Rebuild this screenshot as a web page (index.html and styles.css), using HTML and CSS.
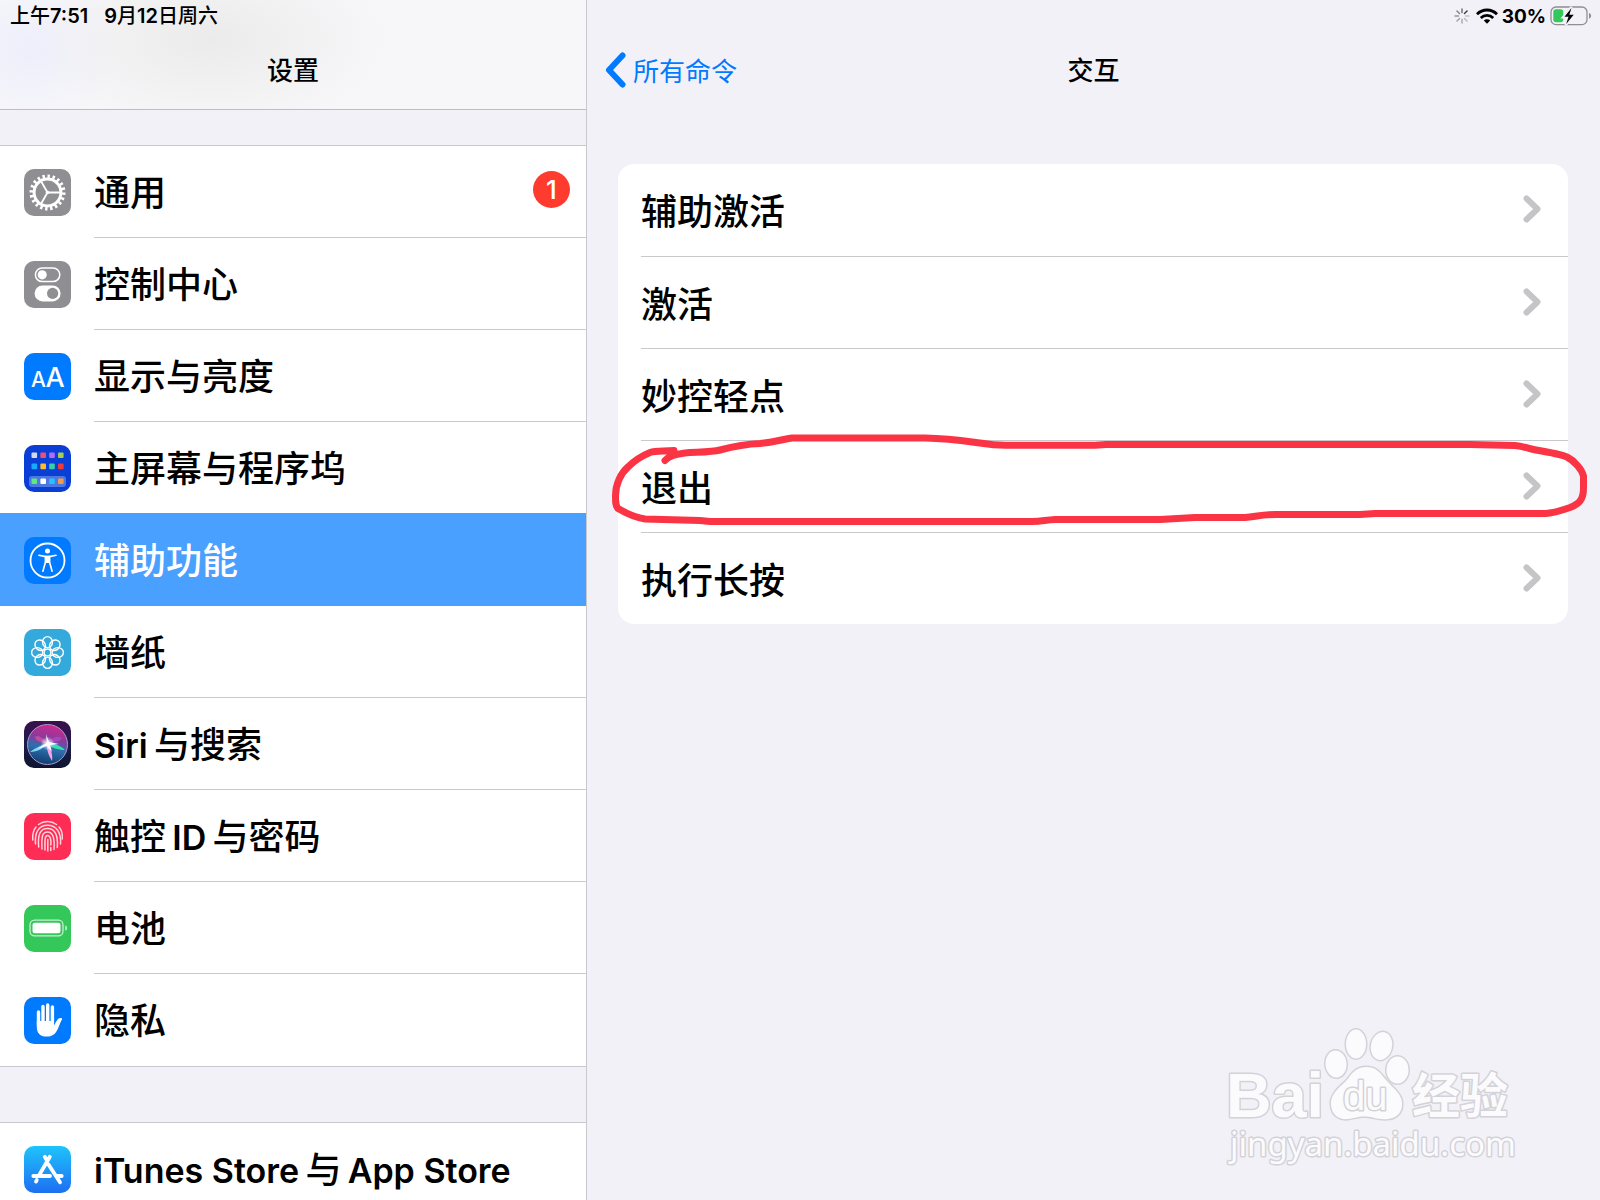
FILE: index.html
```html
<!DOCTYPE html>
<html lang="zh-CN">
<head>
    <meta charset="UTF-8">
    <meta name="viewport" content="width=device-width, initial-scale=1.0">
    <title>设置</title>
    <link rel="stylesheet" href="styles.css">
</head>
<body>
    <aside class="sidebar">
        <header class="sidebar-header">
            <div class="status-bar status-left">
                <span>上午<b>7:51</b></span>
                <span><b>9</b>月<b>12</b>日周六</span>
            </div>
            <div class="nav-bar">
                <h1 class="nav-title">设置</h1>
            </div>
        </header>

        <nav>
            <ul class="group">
                <li><a class="row" href="#general">
                    <svg class="icon" viewBox="0 0 47 47">
                        <rect width="47" height="47" rx="10" fill="#8e8e93"/>
                        <g fill="none" stroke="#fff">
                            <circle cx="23.5" cy="23.5" r="16" stroke-width="4" pathLength="80" stroke-dasharray="1.9 2.1"/>
                            <circle cx="23.5" cy="23.5" r="13.4" stroke-width="3"/>
                            <path d="M23.5 23.5H36M23.5 23.5L17.2 12.5M23.5 23.5L17.2 34.5" stroke-width="1.8"/>
                        </g>
                        <circle cx="23.5" cy="23.5" r="1.8" fill="#fff"/>
                    </svg>
                    <span class="row-body">通用<span class="badge">1</span></span>
                </a></li>
                <li><a class="row" href="#control">
                    <svg class="icon" viewBox="0 0 47 47">
                        <rect width="47" height="47" rx="10" fill="#8e8e93"/>
                        <rect x="11.4" y="7" width="24.4" height="13.6" rx="6.8" fill="none" stroke="#fff" stroke-width="1.5"/>
                        <circle cx="18.2" cy="13.8" r="4.6" fill="#fff"/>
                        <rect x="10.6" y="24.4" width="26" height="16" rx="8" fill="#fff"/>
                        <circle cx="28.6" cy="32.4" r="5.6" fill="#8e8e93"/>
                    </svg>
                    <span class="row-body">控制中心</span>
                </a></li>
                <li><a class="row" href="#display">
                    <svg class="icon" viewBox="0 0 47 47">
                        <rect width="47" height="47" rx="10" fill="#007aff"/>
                        <text class="icon-text" x="7" y="33.5" font-size="21">A</text>
                        <text class="icon-text" x="21.5" y="33.5" font-size="27">A</text>
                    </svg>
                    <span class="row-body">显示与亮度</span>
                </a></li>
                <li><a class="row" href="#home">
                    <svg class="icon" viewBox="0 0 47 47">
                        <rect width="47" height="47" rx="10" fill="#0a3fd6"/>
                        <rect x="5" y="31" width="37" height="11" rx="3" fill="#4d78e2"/>
                        <rect x="7.5" y="7.5" width="5.6" height="5.6" rx="1" fill="#d5daea"/>
                        <rect x="16.4" y="7.5" width="5.6" height="5.6" rx="1" fill="#f0506e"/>
                        <rect x="25.2" y="7.5" width="5.6" height="5.6" rx="1" fill="#b469ff"/>
                        <rect x="34" y="7.5" width="5.6" height="5.6" rx="1" fill="#a6cf4c"/>
                        <rect x="7.5" y="18.6" width="5.6" height="5.6" rx="1" fill="#19aaff"/>
                        <rect x="16.4" y="18.6" width="5.6" height="5.6" rx="1" fill="#ffbd2b"/>
                        <rect x="25.2" y="18.6" width="5.6" height="5.6" rx="1" fill="#35d0a5"/>
                        <rect x="34" y="18.6" width="5.6" height="5.6" rx="1" fill="#f13a3a"/>
                        <rect x="7.5" y="33.5" width="5.6" height="5.6" rx="1" fill="#5fe87b"/>
                        <rect x="16.4" y="33.5" width="5.6" height="5.6" rx="1" fill="#fff"/>
                        <rect x="25.2" y="33.5" width="5.6" height="5.6" rx="1" fill="#22c3ff"/>
                        <rect x="34" y="33.5" width="5.6" height="5.6" rx="1" fill="#f59a4b"/>
                    </svg>
                    <span class="row-body">主屏幕与程序坞</span>
                </a></li>
                <li><a class="row selected" href="#accessibility" aria-current="page">
                    <svg class="icon" viewBox="0 0 47 47">
                        <rect width="47" height="47" rx="10" fill="#007aff"/>
                        <circle cx="23.5" cy="23.5" r="17" fill="none" stroke="#fff" stroke-width="1.8"/>
                        <circle cx="23.5" cy="14" r="2.5" fill="#fff"/>
                        <path d="M15 18.3L21.5 19.6V25L18.9 34.2M32 18.3L25.5 19.6V25L28.1 34.2" fill="none" stroke="#fff" stroke-width="1.6" stroke-linecap="round" stroke-linejoin="round"/>
                        <path d="M20.8 18.6H26.2V26H20.8Z" fill="#fff"/>
                    </svg>
                    <span class="row-body">辅助功能</span>
                </a></li>
                <li><a class="row" href="#wallpaper">
                    <svg class="icon" viewBox="0 0 47 47">
                        <rect width="47" height="47" rx="10" fill="#34aadc"/>
                        <g fill="none" stroke="#fff" stroke-width="1.4">
                            <ellipse cx="23.5" cy="13.2" rx="4.9" ry="5.6"/>
                            <ellipse cx="23.5" cy="13.2" rx="4.9" ry="5.6" transform="rotate(45 23.5 23.5)"/>
                            <ellipse cx="23.5" cy="13.2" rx="4.9" ry="5.6" transform="rotate(90 23.5 23.5)"/>
                            <ellipse cx="23.5" cy="13.2" rx="4.9" ry="5.6" transform="rotate(135 23.5 23.5)"/>
                            <ellipse cx="23.5" cy="13.2" rx="4.9" ry="5.6" transform="rotate(180 23.5 23.5)"/>
                            <ellipse cx="23.5" cy="13.2" rx="4.9" ry="5.6" transform="rotate(225 23.5 23.5)"/>
                            <ellipse cx="23.5" cy="13.2" rx="4.9" ry="5.6" transform="rotate(270 23.5 23.5)"/>
                            <ellipse cx="23.5" cy="13.2" rx="4.9" ry="5.6" transform="rotate(315 23.5 23.5)"/>
                            <circle cx="23.5" cy="23.5" r="3.4"/>
                        </g>
                    </svg>
                    <span class="row-body">墙纸</span>
                </a></li>
                <li><a class="row" href="#siri">
                    <svg class="icon" viewBox="0 0 47 47">
                        <defs>
                            <linearGradient id="siri-bg" x1="0" y1="0" x2="0" y2="1">
                                <stop offset="0" stop-color="#3a0f4d"/>
                                <stop offset=".5" stop-color="#1e1e4a"/>
                                <stop offset="1" stop-color="#0d1430"/>
                            </linearGradient>
                            <linearGradient id="siri-orb" x1=".6" y1="0" x2=".4" y2="1">
                                <stop offset="0" stop-color="#d0288f"/>
                                <stop offset=".35" stop-color="#8a3a9c"/>
                                <stop offset=".6" stop-color="#2c6fae"/>
                                <stop offset="1" stop-color="#123a6c"/>
                            </linearGradient>
                            <radialGradient id="siri-glow">
                                <stop offset="0" stop-color="#fff"/>
                                <stop offset="1" stop-color="#fff" stop-opacity="0"/>
                            </radialGradient>
                        </defs>
                        <rect width="47" height="47" rx="10" fill="url(#siri-bg)"/>
                        <circle cx="23.5" cy="23.5" r="20" fill="url(#siri-orb)" stroke="#a79bc4" stroke-width="1"/>
                        <path d="M23 22C17 15 13 14 11 16C12 20 18 22 23 22Z" fill="#e0509f" opacity=".7"/>
                        <path d="M24 22C27 17 33 14 38 17C36 21 30 22 24 22Z" fill="#b04cc4" opacity=".7"/>
                        <path d="M24 22C30 22 37 25 41 29C34 29 27 27 24 22Z" fill="#35e0b0"/>
                        <path d="M23 22C17 24 10 28 6 31C13 31 21 27 23 22Z" fill="#7fd4f4"/>
                        <path d="M23 22C27 28 29 34 28 40C25 35 22 28 23 22Z" fill="#f3a4e4"/>
                        <path d="M23 22L22 13L25 21L35 23L26 24L28 31L23 25L13 28Z" fill="#fff"/>
                        <circle cx="23.5" cy="22.5" r="7" fill="url(#siri-glow)"/>
                    </svg>
                    <span class="row-body"><span><span class="latin">Siri</span>&thinsp;与搜索</span></span>
                </a></li>
                <li><a class="row" href="#touchid">
                    <svg class="icon" viewBox="0 0 47 47">
                        <rect width="47" height="47" rx="10" fill="#ff2d55"/>
                        <g fill="none" stroke="#ffd5dd" stroke-width="1.5" stroke-linecap="round">
                            <path d="M14.5 11.5C20 7.6 27 7.6 32.5 11.5"/>
                            <path d="M8.8 27C8.2 21 9.5 17 12 14"/>
                            <path d="M11.5 31C10.5 19 15 12.2 23.5 12.2C32 12.2 37.5 19 36.5 31"/>
                            <path d="M35 14C37.6 17 38.8 21 38.2 26"/>
                            <path d="M14.7 34C13.6 22 16 15.6 23.5 15.6C31 15.6 34.3 22 33.3 34.5"/>
                            <path d="M18 36C17.4 24 18 19 23.5 19C29 19 30.8 25 30 36.5"/>
                            <path d="M21 37C20.8 27 20.8 22.4 23.5 22.4C26.8 22.4 27.3 28 26.8 32"/>
                            <path d="M23.8 26.5V38M26.8 34.5V37.5"/>
                        </g>
                    </svg>
                    <span class="row-body"><span>触控&thinsp;<span class="latin">ID</span>&thinsp;与密码</span></span>
                </a></li>
                <li><a class="row" href="#battery">
                    <svg class="icon" viewBox="0 0 47 47">
                        <rect width="47" height="47" rx="10" fill="#34c759"/>
                        <rect x="6" y="15.2" width="33" height="15.6" rx="4.5" fill="none" stroke="#c6f0d0" stroke-width="1.3"/>
                        <rect x="8.5" y="17.7" width="28" height="10.6" rx="2.2" fill="#fff"/>
                        <path d="M41.2 20.5C43.8 21 43.8 25.2 41.2 25.7Z" fill="#c6f0d0"/>
                    </svg>
                    <span class="row-body">电池</span>
                </a></li>
                <li><a class="row" href="#privacy">
                    <svg class="icon" viewBox="0 0 47 47">
                        <rect width="47" height="47" rx="10" fill="#007aff"/>
                        <path d="M14.5 15V28M19 9.5V26M23.7 8V26M28.4 10V26" fill="none" stroke="#fff" stroke-width="3.4" stroke-linecap="round"/>
                        <path d="M12.8 24H30V28.5C31.5 26 33 23 34.6 21.6C36 20.6 38 20.8 38.2 22C36.5 25 35.5 28 34 31.5C31.5 37.5 28 39.6 22.8 39.6C16 39.6 12.8 36 12.8 30Z" fill="#fff"/>
                    </svg>
                    <span class="row-body">隐私</span>
                </a></li>
            </ul>

            <ul class="group">
                <li><a class="row" href="#store">
                    <svg class="icon" viewBox="0 0 47 47">
                        <defs>
                            <linearGradient id="store-bg" x1="0" y1="0" x2="0" y2="1">
                                <stop offset="0" stop-color="#1fc3fb"/>
                                <stop offset="1" stop-color="#1d6ff2"/>
                            </linearGradient>
                        </defs>
                        <rect width="47" height="47" rx="10" fill="url(#store-bg)"/>
                        <g fill="none" stroke="#fff" stroke-width="3.8" stroke-linecap="round">
                            <path d="M25.8 10.8L15 29.5M20.8 10.8L23.4 15.2M24.5 18.5L36 36.3M12.8 34L12 35.6"/>
                            <path d="M9.3 30H26M32.5 30H37.7"/>
                        </g>
                    </svg>
                    <span class="row-body"><span><span class="latin">iTunes Store</span>&thinsp;与&thinsp;<span class="latin">App Store</span></span></span>
                </a></li>
            </ul>
        </nav>
    </aside>

    <main class="detail">
        <header class="detail-header">
            <div class="status-bar status-right">
                <svg class="spinner" viewBox="0 0 16 16" fill="none" stroke="#3c3c43" stroke-width="1.5" stroke-linecap="round">
                    <path d="M8 1V4.5" opacity=".7"/>
                    <path d="M13 3L10.5 5.5"/>
                    <path d="M15 8H11.5" opacity=".25"/>
                    <path d="M13 13L10.5 10.5" opacity=".3"/>
                    <path d="M8 15V11.5" opacity=".4"/>
                    <path d="M3 13L5.5 10.5" opacity=".45"/>
                    <path d="M1 8H4.5" opacity=".5"/>
                    <path d="M3 3L5.5 5.5" opacity=".6"/>
                </svg>
                <svg class="wifi" viewBox="0 0 22 16">
                    <g fill="none" stroke="#000" stroke-width="2.8">
                        <path d="M1 6.2C6.5 .6 15.5 .6 21 6.2"/>
                        <path d="M4.8 10C8.3 6.5 13.7 6.5 17.2 10"/>
                    </g>
                    <path d="M7.8 12.4C9.6 10.7 12.4 10.7 14.2 12.4L11 15.7Z"/>
                </svg>
                <b>30%</b>
                <svg class="battery" viewBox="0 0 42 20">
                    <rect x="1" y="1" width="36" height="17.6" rx="5" fill="none" stroke="#8e8e93" stroke-width="1.3"/>
                    <path d="M39 7C41.8 7.6 41.8 12 39 12.6Z" fill="#8e8e93"/>
                    <rect x="3.3" y="3.3" width="10" height="13" rx="2.8" fill="#34c759"/>
                    <path d="M21.5 1L13 11.3H18L15.8 19L24.5 8.3H19.3Z" stroke="#f2f1f7" stroke-width="2.5"/>
                    <path d="M21.5 2L14.5 10.7H18.5L16.2 18L23.7 8.8H19.3Z"/>
                </svg>
            </div>
            <div class="nav-bar">
                <a class="back" href="#commands">
                    <svg class="back-arrow" viewBox="0 0 21 36"><path d="M17.5 3.5L4 18L17.5 32.5" fill="none" stroke="#007aff" stroke-width="6" stroke-linecap="round" stroke-linejoin="round"/></svg>
                    所有命令
                </a>
                <h2 class="nav-title">交互</h2>
            </div>
        </header>

        <ul class="card">
            <li><a class="card-row" href="#assist">辅助激活
                <svg class="chevron" viewBox="0 0 18 28"><path d="M3.5 3.5L14.5 14L3.5 24.5"/></svg>
            </a></li>
            <li><a class="card-row" href="#activate">激活
                <svg class="chevron" viewBox="0 0 18 28"><path d="M3.5 3.5L14.5 14L3.5 24.5"/></svg>
            </a></li>
            <li><a class="card-row" href="#magic-tap">妙控轻点
                <svg class="chevron" viewBox="0 0 18 28"><path d="M3.5 3.5L14.5 14L3.5 24.5"/></svg>
            </a></li>
            <li class="marked">
                <a class="card-row" href="#escape">退出
                    <svg class="chevron" viewBox="0 0 18 28"><path d="M3.5 3.5L14.5 14L3.5 24.5"/></svg>
                </a>
                <!-- hand-drawn circle around the row -->
                <svg class="marker" viewBox="618 440 950 92" preserveAspectRatio="none">
                    <path d="M665 460.5C668 457 675 454 685 453C700 452 712 452 720 450C735 446 745 444 760 443.5C775 442 782 439.5 792 438H925C950 438.5 965 441 980 443C992 445 998 445.3 1006 445.3H1095L1106 444.5H1470L1515 445.5C1525 446.5 1528 448.5 1536 450C1548 452 1560 454 1567 457C1575 461 1582 470 1583.5 476V488C1583.5 500 1579 504 1570 507.5C1563 510 1552 513 1546 513.5H1375L1360 514.5H1275C1258 515 1255 517 1245 517.5H1195L1160 519.5H1055C1045 520 1042 521.5 1032 521.5H710L700 520.5L645 519C632 517 624 512 618 508.5C615.5 506 615.5 502 615.5 496C615.5 484 621 473 628 467C634 461 644 455 650 452.5C656 450.5 664 451.5 674 450.5"/>
                </svg>
            </li>
            <li><a class="card-row" href="#long-press">执行长按
                <svg class="chevron" viewBox="0 0 18 28"><path d="M3.5 3.5L14.5 14L3.5 24.5"/></svg>
            </a></li>
        </ul>

        <svg class="watermark" viewBox="0 0 290 150">
            <g class="outline">
                <text class="wm-logo" x="0" y="91">Bai</text>
                <ellipse cx="110" cy="38" rx="10.5" ry="13.5" transform="rotate(-5 110 38)"/>
                <ellipse cx="130" cy="18" rx="10" ry="14.5"/>
                <ellipse cx="155.5" cy="20" rx="10.5" ry="14" transform="rotate(12 155.5 20)"/>
                <ellipse cx="171.5" cy="44" rx="11" ry="13.5"/>
                <path d="M140 41C128 41 125 50 119 56C111 63 104 70 105 79C106 90 114 94 122 93C130 92 133 90 140 90.5C148 91 152 94 162 93C172 92 177 85 176 76C175 67 166 61 160 54C154 47 151 41 140 41Z"/>
                <text class="wm-du" x="117" y="84">du</text>
                <text class="wm-cjk" x="186" y="87">经验</text>
                <text class="wm-url" x="4" y="130">jingyan.baidu.com</text>
            </g>
        </svg>
    </main>
</body>
</html>
```
FILE: styles.css
```css
* {
    box-sizing: border-box;
}

body {
    margin: 0;
    height: 100vh;
    display: flex;
    overflow: hidden;
    background-color: #f2f1f7;
    color: #000;
    font-family: Inter, "Noto Sans CJK SC", sans-serif;
}

ul {
    list-style: none;
    margin: 0;
    padding: 0;
}

a {
    color: inherit;
    text-decoration: none;
}

svg {
    display: block;
    flex-shrink: 0;
}

.sidebar {
    flex: 0 0 587px;
    border-right: 1px solid #c9c8cd;
    overflow: hidden;
}

.sidebar-header {
    border-bottom: 1px solid #bebec2;
    background:
        radial-gradient(ellipse 180px 90px at 210px 40px, #ebebeb, transparent),
        radial-gradient(ellipse 90px 80px at 30px 50px, #eeeefc, transparent),
        #f7f7f9;
}

.status-bar {
    display: flex;
    align-items: center;
    height: 32px;
    font-weight: 500;
}

.status-bar b {
    font-weight: 600;
}

.status-left {
    gap: 16px;
    padding: 0 10px 4px;
    font-size: 20px;
}

.status-right {
    justify-content: flex-end;
    gap: 4px;
    padding-right: 8px;
    font-size: 19px;
}

.status-right b {
    font-weight: 700;
}

.spinner {
    width: 16px;
    height: 16px;
    margin-right: 2px;
}

.wifi {
    width: 22px;
    height: 16px;
}

.battery {
    width: 42px;
    height: 20px;
}

.nav-bar {
    display: grid;
    grid-template-columns: 1fr auto 1fr;
    align-items: center;
    height: 77px;
    padding: 0 18px 2px;
    font-size: 26px;
}

.nav-title {
    grid-column: 2;
    margin: 0;
    padding-bottom: 2px;
    font-size: 26px;
    font-weight: 500;
}

.back {
    display: flex;
    align-items: center;
    gap: 7px;
    color: #007aff;
}

.back-arrow {
    width: 21px;
    height: 36px;
}

.group {
    margin-top: 35px;
    border-top: 1px solid #c9c8cd;
    border-bottom: 1px solid #c9c8cd;
    background-color: #fff;
}

.group + .group {
    margin-top: 55px;
}

.row {
    display: flex;
    align-items: center;
    gap: 23px;
    height: 92px;
    padding-left: 24px;
    font-size: 36px;
    font-weight: 500;
}

.icon {
    width: 47px;
    height: 47px;
}

.icon-text {
    fill: #fff;
    font-weight: 500;
}

.row-body {
    flex: 1;
    align-self: stretch;
    display: flex;
    align-items: center;
    justify-content: space-between;
    padding: 0 16px 4px 0;
    border-bottom: 1px solid #c9c8cd;
    white-space: nowrap;
}

li:last-child .row-body {
    border-bottom: 0;
}

.latin {
    font-size: 34px;
    font-weight: 600;
}

.row.selected {
    position: relative;
    background-color: #4aa0ff;
    box-shadow: 0 -1px 0 #4aa0ff;
    color: #fff;
}

.row.selected .row-body {
    border-color: #4aa0ff;
}

.badge {
    width: 37px;
    height: 37px;
    border-radius: 50%;
    background-color: #ff3b30;
    color: #fff;
    font-size: 26px;
    line-height: 37px;
    text-align: center;
}

.detail {
    flex: 1;
    position: relative;
}

.card {
    margin: 55px 32px 0 31px;
    padding-left: 23px;
    border-radius: 16px;
    background-color: #fff;
}

.card li + li .card-row {
    border-top: 1px solid #c9c8cd;
}

.card-row {
    display: flex;
    align-items: center;
    justify-content: space-between;
    height: 92px;
    padding: 0 27px 2px 0;
    font-size: 36px;
    font-weight: 500;
}

.chevron {
    width: 18px;
    height: 28px;
    fill: none;
    stroke: #c5c5c8;
    stroke-width: 6;
    stroke-linecap: round;
    stroke-linejoin: round;
}

.marked {
    position: relative;
}

.marker {
    position: absolute;
    top: 0;
    left: -23px;
    width: calc(100% + 23px);
    height: 92px;
    overflow: visible;
    fill: none;
    stroke: #fb3445;
    stroke-width: 7;
    stroke-linecap: round;
    stroke-linejoin: round;
    pointer-events: none;
}

.watermark {
    position: absolute;
    right: 84px;
    bottom: 24px;
    width: 290px;
    height: 150px;
    overflow: visible;
}

.outline {
    fill: #fbfbfe;
    stroke: #d3d2d7;
    stroke-width: 3;
    stroke-linejoin: round;
    paint-order: stroke;
}

.wm-logo {
    font: bold 63px "Liberation Sans", sans-serif;
}

.wm-du {
    font: 40px "Liberation Sans", sans-serif;
}

.wm-cjk {
    font: bold 48px "Noto Sans CJK SC", sans-serif;
}

.wm-url {
    font: 33px "Noto Sans", sans-serif;
}
```
